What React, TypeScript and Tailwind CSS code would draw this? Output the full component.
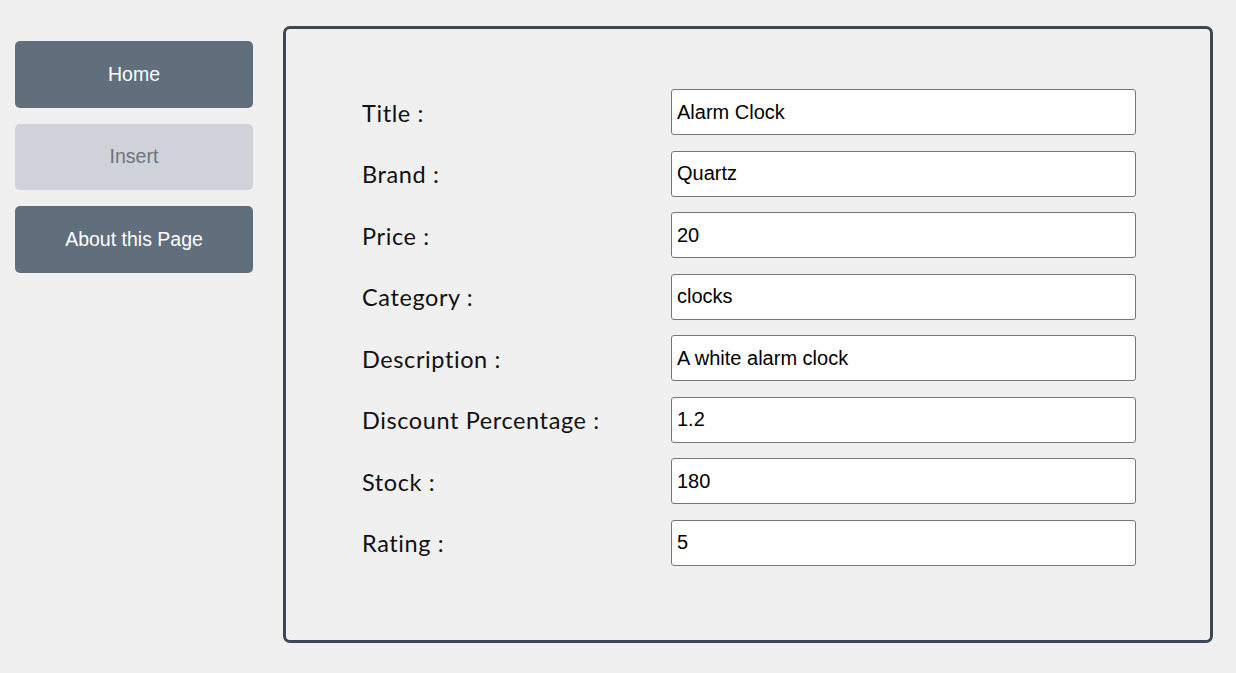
const fields = [
  { label: 'Title', value: 'Alarm Clock' },
  { label: 'Brand', value: 'Quartz' },
  { label: 'Price', value: '20' },
  { label: 'Category', value: 'clocks' },
  { label: 'Description', value: 'A white alarm clock' },
  { label: 'Discount Percentage', value: '1.2' },
  { label: 'Stock', value: '180' },
  { label: 'Rating', value: '5' },
];

const navItems = [
  { name: 'Home', active: false },
  { name: 'Insert', active: true },
  { name: 'About this Page', active: false },
];

function SideNav() {
  return (
    <nav className="flex w-[238px] shrink-0 flex-col gap-4 pt-[15px]">
      {navItems.map(n => (
        <button
          key={n.name}
          className={`flex h-[66.5px] items-center justify-center rounded-[5px] text-[19.5px] font-['Liberation_Sans',Arial,sans-serif] ${
            n.active ? 'bg-[#cfd2d9] text-[#6b7480]' : 'bg-[#616e7c] text-white'
          }`}
        >
          {n.name}
        </button>
      ))}
    </nav>
  );
}

export default function App() {
  return (
    <div className="flex min-h-[673px] gap-[30px] bg-[#f0f0f0] pb-[30px] pl-[15px] pr-[23px] pt-[26px]">
      <SideNav />
      <main className="flex-1 rounded-[7px] border-[3px] border-[#3e4757] pl-[76px] pt-[60px]">
        <form className="flex flex-col gap-[15.5px]">
          {fields.map(f => (
            <div key={f.label} className="flex items-center">
              <label className="w-[309px] pt-[3px] font-['Lato',sans-serif] text-[23.5px] tracking-[0.6px] text-[#111]">
                {f.label} :
              </label>
              <input
                readOnly
                value={f.value}
                className="h-[46px] w-[465px] rounded-[3px] border border-[#767676] bg-white px-[5px] font-['Liberation_Sans',Arial,sans-serif] text-[20px] text-black outline-none"
              />
            </div>
          ))}
        </form>
      </main>
    </div>
  );
}
